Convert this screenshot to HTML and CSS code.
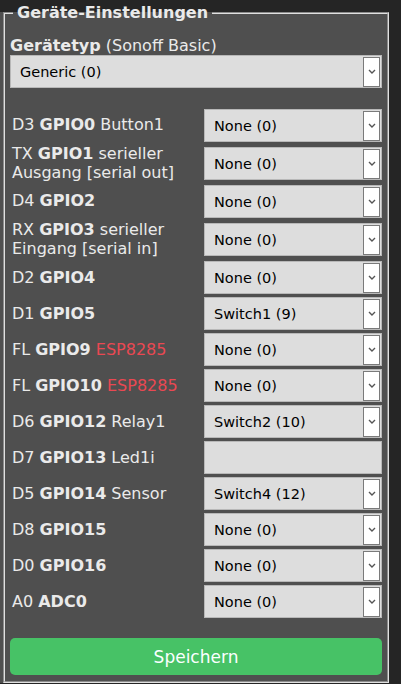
FILE: index.html
```html
<!DOCTYPE html>
<html lang="de">
<head>
<meta charset="utf-8">
<title>Geräte-Einstellungen</title>
<link rel="stylesheet" href="styles.css">
</head>
<body>
<fieldset class="panel">
  <legend class="panel-title">Geräte-Einstellungen</legend>
  <p class="type-label"><b>Gerätetyp</b> (Sonoff Basic)</p>
  <div class="sel"><span class="sel-text">Generic (0)</span><span class="sel-btn"><svg viewBox="0 0 8 5" width="8" height="5"><path d="M1 1 L4 4 L7 1" fill="none" stroke="#555" stroke-width="1.4"/></svg></span></div>

  <div class="pins">
    <div class="pin-label">D3 <b>GPIO0</b> Button1</div>
    <div class="sel"><span class="sel-text">None (0)</span><span class="sel-btn"><svg viewBox="0 0 8 5" width="8" height="5"><path d="M1 1 L4 4 L7 1" fill="none" stroke="#555" stroke-width="1.4"/></svg></span></div>

    <div class="pin-label">TX <b>GPIO1</b> <span>serieller</span> <span>Ausgang [serial out]</span></div>
    <div class="sel"><span class="sel-text">None (0)</span><span class="sel-btn"><svg viewBox="0 0 8 5" width="8" height="5"><path d="M1 1 L4 4 L7 1" fill="none" stroke="#555" stroke-width="1.4"/></svg></span></div>

    <div class="pin-label">D4 <b>GPIO2</b></div>
    <div class="sel"><span class="sel-text">None (0)</span><span class="sel-btn"><svg viewBox="0 0 8 5" width="8" height="5"><path d="M1 1 L4 4 L7 1" fill="none" stroke="#555" stroke-width="1.4"/></svg></span></div>

    <div class="pin-label">RX <b>GPIO3</b> <span>serieller</span> <span>Eingang [serial in]</span></div>
    <div class="sel"><span class="sel-text">None (0)</span><span class="sel-btn"><svg viewBox="0 0 8 5" width="8" height="5"><path d="M1 1 L4 4 L7 1" fill="none" stroke="#555" stroke-width="1.4"/></svg></span></div>

    <div class="pin-label">D2 <b>GPIO4</b></div>
    <div class="sel"><span class="sel-text">None (0)</span><span class="sel-btn"><svg viewBox="0 0 8 5" width="8" height="5"><path d="M1 1 L4 4 L7 1" fill="none" stroke="#555" stroke-width="1.4"/></svg></span></div>

    <div class="pin-label">D1 <b>GPIO5</b></div>
    <div class="sel"><span class="sel-text">Switch1 (9)</span><span class="sel-btn"><svg viewBox="0 0 8 5" width="8" height="5"><path d="M1 1 L4 4 L7 1" fill="none" stroke="#555" stroke-width="1.4"/></svg></span></div>

    <div class="pin-label">FL <b>GPIO9</b> <span class="warn">ESP8285</span></div>
    <div class="sel"><span class="sel-text">None (0)</span><span class="sel-btn"><svg viewBox="0 0 8 5" width="8" height="5"><path d="M1 1 L4 4 L7 1" fill="none" stroke="#555" stroke-width="1.4"/></svg></span></div>

    <div class="pin-label">FL <b>GPIO10</b> <span class="warn">ESP8285</span></div>
    <div class="sel"><span class="sel-text">None (0)</span><span class="sel-btn"><svg viewBox="0 0 8 5" width="8" height="5"><path d="M1 1 L4 4 L7 1" fill="none" stroke="#555" stroke-width="1.4"/></svg></span></div>

    <div class="pin-label">D6 <b>GPIO12</b> Relay1</div>
    <div class="sel"><span class="sel-text">Switch2 (10)</span><span class="sel-btn"><svg viewBox="0 0 8 5" width="8" height="5"><path d="M1 1 L4 4 L7 1" fill="none" stroke="#555" stroke-width="1.4"/></svg></span></div>

    <div class="pin-label">D7 <b>GPIO13</b> Led1i</div>
    <div class="sel sel-empty"></div>

    <div class="pin-label">D5 <b>GPIO14</b> Sensor</div>
    <div class="sel"><span class="sel-text">Switch4 (12)</span><span class="sel-btn"><svg viewBox="0 0 8 5" width="8" height="5"><path d="M1 1 L4 4 L7 1" fill="none" stroke="#555" stroke-width="1.4"/></svg></span></div>

    <div class="pin-label">D8 <b>GPIO15</b></div>
    <div class="sel"><span class="sel-text">None (0)</span><span class="sel-btn"><svg viewBox="0 0 8 5" width="8" height="5"><path d="M1 1 L4 4 L7 1" fill="none" stroke="#555" stroke-width="1.4"/></svg></span></div>

    <div class="pin-label">D0 <b>GPIO16</b></div>
    <div class="sel"><span class="sel-text">None (0)</span><span class="sel-btn"><svg viewBox="0 0 8 5" width="8" height="5"><path d="M1 1 L4 4 L7 1" fill="none" stroke="#555" stroke-width="1.4"/></svg></span></div>

    <div class="pin-label">A0 <b>ADC0</b></div>
    <div class="sel"><span class="sel-text">None (0)</span><span class="sel-btn"><svg viewBox="0 0 8 5" width="8" height="5"><path d="M1 1 L4 4 L7 1" fill="none" stroke="#555" stroke-width="1.4"/></svg></span></div>
  </div>

  <button class="save" type="button">Speichern</button>
</fieldset>
</body>
</html>
```

FILE: styles.css
```css
html, body {
  margin: 0;
  padding: 0;
  background: #252525;
}

body {
  font-family: "DejaVu Sans", Verdana, sans-serif;
  font-size: 16px;
  line-height: 18px;
  color: #eaeaea;
  width: 401px;
  height: 684px;
  overflow: hidden;
}

.panel {
  box-sizing: border-box;
  width: 386px;
  margin: 4px 0 0 3px;
  padding: 15px 5px 6px 5px;
  border: 2px groove #e0e0e0;
  background: #4f4f4f;
  box-shadow: -4px 0 0 0 #4f4f4f;
}

.panel-title {
  font-weight: bold;
  margin-left: 3px;
  padding: 0 4px;
  line-height: 18px;
  color: #eaeaea;
}

.type-label {
  margin: 0;
  padding: 0;
}

.sel {
  box-sizing: border-box;
  height: 33px;
  background: #dddddd;
  border: 1px solid #b8b8b8;
  display: flex;
  align-items: center;
  justify-content: space-between;
  color: #000;
  font-size: 14.5px;
}

.sel-text {
  padding-left: 9px;
  white-space: nowrap;
}

.sel-btn {
  box-sizing: border-box;
  width: 17px;
  height: 30px;
  margin-right: 1px;
  background: #ffffff;
  border: 1px solid #7a7a7a;
  display: flex;
  align-items: center;
  justify-content: center;
}

.sel-btn svg {
  display: block;
}

.pins {
  margin-top: 21px;
  display: grid;
  grid-template-columns: 1fr 178px;
  row-gap: 3px;
  align-items: center;
}

.pin-label {
  padding-left: 2px;
  padding-right: 4px;
  line-height: 18.6px;
}

.warn {
  color: #ea4852;
}

.save {
  display: block;
  box-sizing: border-box;
  width: 100%;
  height: 37px;
  margin-top: 20px;
  border: 0;
  border-radius: 5px;
  background: #47c266;
  color: #faffff;
  font-family: "DejaVu Sans", Verdana, sans-serif;
  font-size: 17px;
  padding: 0;
}
```
